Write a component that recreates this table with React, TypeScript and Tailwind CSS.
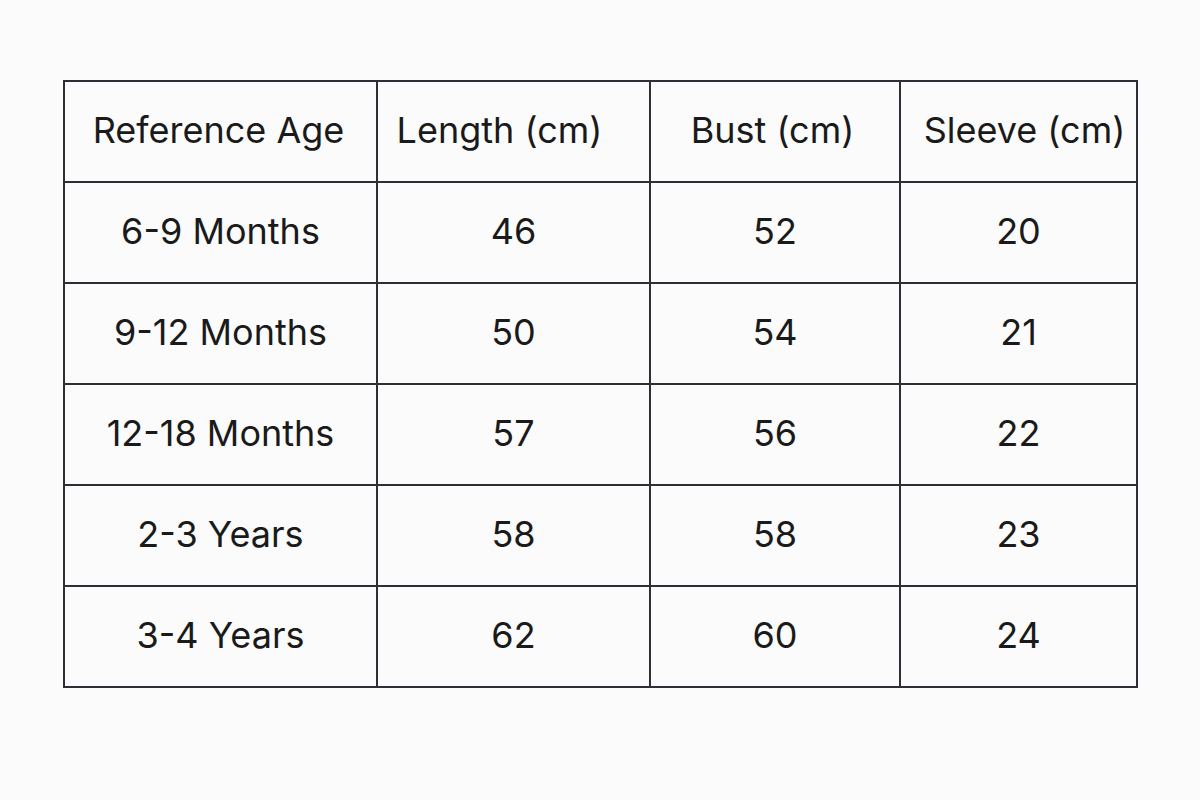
const headers = [
  { label: 'Reference Age', pad: 'pr-[4px]' },
  { label: 'Length (cm)', pad: 'pr-[28px]' },
  { label: 'Bust (cm)', pad: 'pr-[5px]' },
  { label: 'Sleeve (cm)', pad: 'pl-[12px]' },
]

const rows = [
  ['6-9 Months', '46', '52', '20'],
  ['9-12 Months', '50', '54', '21'],
  ['12-18 Months', '57', '56', '22'],
  ['2-3 Years', '58', '58', '23'],
  ['3-4 Years', '62', '60', '24'],
]

export default function App() {
  return (
    <div
      className="w-[1200px] h-[800px] bg-[#fbfbfb] pt-[80px] pl-[63px] text-[#1a1a1a]"
      style={{ fontFamily: 'Inter, "Noto Sans", sans-serif' }}
    >
      <table className="border-collapse w-[1073px] table-fixed">
        <colgroup>
          <col className="w-[313px]" />
          <col className="w-[273px]" />
          <col className="w-[250px]" />
          <col className="w-[237px]" />
        </colgroup>
        <thead>
          <tr className="h-[101px]">
            {headers.map((h) => (
              <th
                key={h.label}
                className={`border-2 border-[#2c3036] text-center font-normal text-[36px] whitespace-nowrap py-0 pb-[4px] ${h.pad}`}
              >
                {h.label}
              </th>
            ))}
          </tr>
        </thead>
        <tbody>
          {rows.map((r) => (
            <tr key={r[0]} className="h-[101px]">
              {r.map((c, i) => (
                <td
                  key={i}
                  className="border-2 border-[#2c3036] text-center text-[36px] whitespace-nowrap p-0 pb-[4px]"
                >
                  {c}
                </td>
              ))}
            </tr>
          ))}
        </tbody>
      </table>
    </div>
  )
}
